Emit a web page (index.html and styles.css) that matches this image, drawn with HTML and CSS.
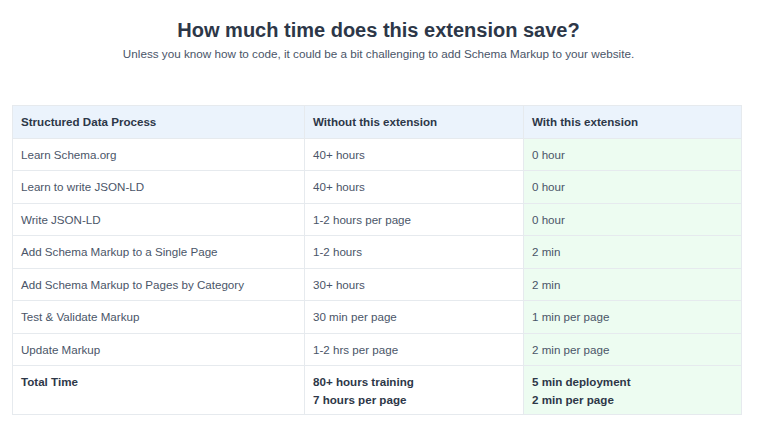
FILE: index.html
```html
<!DOCTYPE html>
<html>
<head>
<meta charset="utf-8">
<link rel="stylesheet" href="styles.css">
</head>
<body>
<section class="wrap">
  <h1 class="title">How much time does this extension save?</h1>
  <p class="sub">Unless you know how to code, it could be a bit challenging to add Schema Markup to your website.</p>
  <table class="cmp">
    <thead>
      <tr><th>Structured Data Process</th><th>Without this extension</th><th class="with">With this extension</th></tr>
    </thead>
    <tbody>
      <tr><td>Learn Schema.org</td><td>40+ hours</td><td class="with">0 hour</td></tr>
      <tr><td>Learn to write JSON-LD</td><td>40+ hours</td><td class="with">0 hour</td></tr>
      <tr><td>Write JSON-LD</td><td>1-2 hours per page</td><td class="with">0 hour</td></tr>
      <tr><td>Add Schema Markup to a Single Page</td><td>1-2 hours</td><td class="with">2 min</td></tr>
      <tr><td>Add Schema Markup to Pages by Category</td><td>30+ hours</td><td class="with">2 min</td></tr>
      <tr><td>Test &amp; Validate Markup</td><td>30 min per page</td><td class="with">1 min per page</td></tr>
      <tr><td>Update Markup</td><td>1-2 hrs per page</td><td class="with">2 min per page</td></tr>
      <tr class="total"><td>Total Time</td><td>80+ hours training<br>7 hours per page</td><td class="with">5 min deployment<br>2 min per page</td></tr>
    </tbody>
  </table>
</section>
</body>
</html>
```
FILE: styles.css
```css
html, body { margin: 0; padding: 0; background: #fff; }
body { font-family: "Liberation Sans", Arial, sans-serif; color: #4a5568; }
.wrap { padding: 17px 12px 0 12px; }
.title { margin: 0; text-align: center; font-size: 20px; line-height: 26px; font-weight: bold; color: #2d3748; }
.sub { margin: 3px 0 0 0; text-align: center; font-size: 11.7px; line-height: 16px; color: #4a5568; }
.cmp { margin-top: 43px; width: 730px; border-collapse: collapse; font-size: 11.6px; }
.cmp th, .cmp td { border: 1px solid #e6eaee; padding: 7px 8px 7px 8px; text-align: left; vertical-align: top; line-height: 17.5px; }
.cmp th:nth-child(1), .cmp td:nth-child(1) { width: 275px; }
.cmp th:nth-child(2), .cmp td:nth-child(2) { width: 202px; }
.cmp th { background: #ebf3fc; color: #2d3748; font-weight: bold; }
.cmp td.with { background: #edfcf1; }
.cmp th.with { background: #ebf3fc; }
.total td { font-weight: bold; color: #2d3748; padding-bottom: 5px; line-height: 18px; }
```
